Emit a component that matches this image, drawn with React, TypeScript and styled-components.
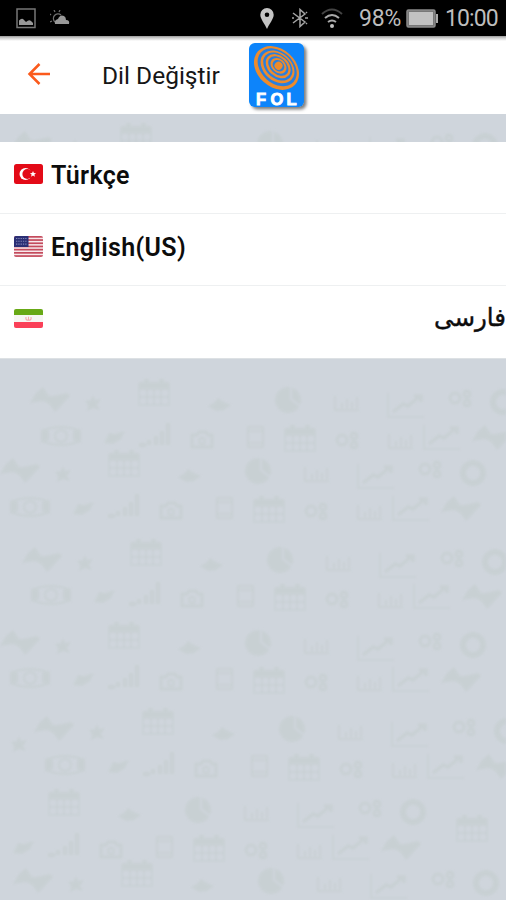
import React from "react";
import styled, { createGlobalStyle } from "styled-components";

const GlobalStyle = createGlobalStyle`
  * { box-sizing: border-box; }
  body { margin: 0; background: #cfd5dc; font-family: Roboto, "Noto Sans", sans-serif; }
`;

const Screen = styled.div`
  position: relative;
  isolation: isolate;
  display: flex;
  flex-direction: column;
  width: 506px;
  height: 900px;
  overflow: hidden;
  background: #cfd5dc;
`;

const Backdrop = styled.svg`
  position: absolute;
  inset: 0;
  z-index: -1;
  color: #c5cecf;
  opacity: 0.62;
  filter: blur(1.3px);
`;

const StatusBar = styled.header`
  display: flex;
  justify-content: space-between;
  height: 36px;
  padding: 0 7px 0 16px;
  background: #000;
  color: #bdbdbd;
`;

const StatusGroup = styled.div<{ $gap?: number }>`
  display: flex;
  align-items: center;
  gap: ${(p) => p.$gap ?? 0}px;
`;

const StatusText = styled.span<{ $width: number; $tracking?: number }>`
  width: ${(p) => p.$width}px;
  font-size: 23px;
  line-height: 37px;
  letter-spacing: ${(p) => p.$tracking ?? 0}px;
  white-space: nowrap;
`;

const StatusIcon = styled.svg<{ $right?: number }>`
  display: block;
  flex: none;
  margin-right: ${(p) => p.$right ?? 0}px;
`;

const TitleBar = styled.div`
  display: flex;
  align-items: flex-start;
  height: 78px;
  padding-left: 27px;
  background: linear-gradient(#999 0, #d0d0d0 2px, #fff 5px);
`;

const BackButton = styled.button`
  display: flex;
  width: 75px;
  height: 78px;
  padding: 26px 0 0;
  border: 0;
  background: none;
`;

const Title = styled.h1`
  width: 145px;
  margin: 0;
  color: #161616;
  font-size: 24.5px;
  font-weight: 400;
  line-height: 80px;
  letter-spacing: 0;
  white-space: nowrap;
`;

const Logo = styled.svg`
  display: block;
  margin-top: 4px;
`;

const LanguageList = styled.ul`
  margin: 28px 0 0;
  padding: 0;
  list-style: none;
  background: #fff;
`;

const LanguageRow = styled.li`
  display: flex;
  align-items: flex-start;
  gap: 8px;
  height: 72px;
  padding-left: 14px;
  border-bottom: 1px solid #eef0f1;

  &:last-child {
    height: 73px;
    border-bottom-color: #dde1e4;
  }
`;

const LanguageName = styled.span`
  color: #0c0c0c;
  font-size: 25px;
  font-weight: 600;
  line-height: 67px;
  letter-spacing: 0.35px;
  white-space: nowrap;
`;

const PersianName = styled(LanguageName)`
  flex: 1;
  font-family: "DejaVu Sans", sans-serif;
  font-size: 24.5px;
  font-weight: 400;
  line-height: 64px;
  letter-spacing: 0;
  text-align: start;
  -webkit-text-stroke: 0.4px #0c0c0c;
`;

const Flag = styled.svg`
  display: block;
  flex: none;
  margin-top: 21px;
`;

type Mark = [kind: string, dx: number, dy: number];

const upperMarks: Mark[] = [
  ["hand", 0, 0], ["star", 43, 5], ["calendar", 104, -6], ["cap", 170, 6], ["pie", 238, 2],
  ["bars", 297, 5], ["line", 356, 7], ["gears", 410, 0], ["donut", 453, 4],
];

const lowerMarks: Mark[] = [
  ["money", 0, 0], ["leaf", 54, 2], ["signal", 95, 0], ["camera", 141, 4], ["phone", 194, 1],
  ["calendar", 239, 2], ["gears", 286, 4], ["bars", 340, 5], ["line", 381, 1], ["hand", 431, 0],
];

const bands: { x: number; y: number; marks: Mark[] }[] = [
  { x: 32, y: 142, marks: upperMarks },
  { x: 50, y: 398, marks: upperMarks },
  { x: 61, y: 436, marks: lowerMarks },
  { x: 20, y: 469, marks: upperMarks },
  { x: 30, y: 507, marks: lowerMarks },
  { x: 42, y: 558, marks: upperMarks },
  { x: 51, y: 595, marks: lowerMarks },
  { x: 20, y: 641, marks: upperMarks },
  { x: 30, y: 678, marks: lowerMarks },
  { x: 54, y: 727, marks: upperMarks },
  { x: 65, y: 765, marks: lowerMarks },
  { x: -40, y: 808, marks: upperMarks.filter(([kind]) => kind !== "star") },
  { x: -30, y: 846, marks: lowerMarks },
  { x: 33, y: 879, marks: upperMarks },
];

const shapes: Record<string, React.ReactNode> = {
  hand: <path d="M-20 5l6-10 7-6 6 9 4 0 14-3 3 3-8 9-7 7-6-8-6-3z" fill="currentColor" />,
  star: <path d="M0-8l2 5 6-1-4 6 3 5-7-2-6 3 1-6-3-4 6-1z" fill="currentColor" />,
  cap: <path d="M-12 2l6-3 4-5 6 4 7 3-7 5-8 1z" fill="currentColor" />,
  leaf: <path d="M-11 5l5-10 6 1 10-3-4 8-8 5z" fill="currentColor" />,
  pie: <><circle r="13" fill="currentColor" /><path d="M3-14V-1L12 6" stroke="#cfd5dc" strokeWidth="2" fill="none" /></>,
  donut: <circle r="10" stroke="currentColor" strokeWidth="6" fill="none" />,
  bars: <path d="M-12-7V7H12M-5 5V0M0 5V-4M5 5V-1M10 5V-6" stroke="currentColor" strokeWidth="2" fill="none" />,
  line: <><path d="M-18-12V12H18" stroke="currentColor" strokeWidth="1.6" fill="none" /><path d="M-13 7l10-8 5 2L14-9M8-9h7v6" stroke="currentColor" strokeWidth="3.4" fill="none" /></>,
  gears: <g stroke="currentColor" strokeWidth="3" fill="none"><circle cx="-5" r="5" /><circle cx="7" cy="-4" r="3" /><circle cx="7" cy="5" r="3" /></g>,
  calendar: <><path d="M-15-8H15V13H-15zM-15-3H15M-15 5H15M-7-3V13M0-3V13M7-3V13" stroke="currentColor" strokeWidth="1.5" fill="none" /><path d="M-15-10h5v-3h5v3H5v-3h5v3h5v7h-30z" fill="currentColor" /></>,
  money: <><path d="M-19-5Q0-13 19-5V5Q0 13-19 5z" stroke="currentColor" strokeWidth="2" fill="none" /><path d="M-19-7l7 2v9l-7 3zM19-7l-7 2v9l7 3z" fill="currentColor" /><circle r="6" stroke="currentColor" strokeWidth="2" fill="none" /></>,
  signal: <path d="M-17 9h7M-7 9V4M0 9V0M6 9V-5M12 9v-22" stroke="currentColor" strokeWidth="4" fill="none" />,
  camera: <><path d="M-10-5h5l2-3h7l2 3h4V7h-20z" stroke="currentColor" strokeWidth="3" fill="none" /><circle cy="1" r="3" fill="none" stroke="currentColor" strokeWidth="2" /></>,
  phone: <path d="M-7-10H8V10H-7zM-7-6H8M-7 6H8" stroke="currentColor" strokeWidth="2" fill="none" />,
};

function Doodles() {
  return (
    <Backdrop width="506" height="900" aria-hidden="true">
      {bands.map((band) =>
        band.marks.map(([kind, dx, dy]) => (
          <g key={`${band.y}-${dx}`} transform={`translate(${band.x + dx} ${band.y + dy})`}>{shapes[kind]}</g>
        )),
      )}
      <g transform="translate(472 828)">{shapes.calendar}</g>
      <g transform="translate(19 744)">{shapes.star}</g>
    </Backdrop>
  );
}

const TurkishFlag = () => (
  <Flag width="29" height="21" viewBox="0 0 29 21">
    <rect y="1" width="29" height="20" rx="2.5" fill="#e30a17" />
    <circle cx="11.5" cy="11" r="6" fill="#fff" />
    <circle cx="13.3" cy="11" r="4.9" fill="#e30a17" />
    <path d="M19 8l.9 2.1 2.2.1-1.7 1.4.5 2.2-1.9-1.2-1.9 1.2.5-2.2-1.7-1.4 2.2-.1z" fill="#fff" />
  </Flag>
);

const AmericanFlag = () => (
  <Flag width="29" height="23" viewBox="0 0 29 23">
    <clipPath id="us"><rect y="1" width="29" height="21" rx="2" /></clipPath>
    <g clipPath="url(#us)">
      <rect width="29" height="23" fill="#f8e9ec" />
      {[1, 4.2, 7.4, 10.6, 13.8, 17, 20.2].map((y) => <rect key={y} y={y} width="29" height="1.7" fill="#c44b5d" />)}
      <rect y="1" width="14.5" height="11" fill="#2b2f75" />
      <path d="M2 3.5h11M2 6.3h11M2 9.1h11" stroke="#8184b6" strokeWidth="1.1" strokeDasharray="1.3 1" />
    </g>
  </Flag>
);

const IranianFlag = () => (
  <Flag width="29" height="22" viewBox="0 0 29 22">
    <clipPath id="ir"><rect y="2" width="29" height="19" rx="2" /></clipPath>
    <g clipPath="url(#ir)">
      <rect y="2" width="29" height="19" fill="#f6f6f3" />
      <rect y="2" width="29" height="6" fill="#68a916" />
      <rect y="15" width="29" height="6" fill="#fa4058" />
    </g>
    <path d="M12 10c-.7 3 1 3.3 2.5 3.3S17.7 13 17 10M14.5 9.8v3.5" stroke="#f7a9ae" strokeWidth="1.1" fill="none" />
  </Flag>
);

export default function App() {
  return (
    <Screen>
      <GlobalStyle />
      <Doodles />
      <StatusBar>
        <StatusGroup $gap={14}>
          <StatusIcon width="20" height="21" viewBox="0 0 20 21">
            <rect x="1" y="1" width="18" height="18.5" fill="none" stroke="#777" strokeWidth="1.5" />
            <path d="M3 17v-4.500q3-3 5-.5l2 2q3-3 5-1l2 2v2z" fill="#999" />
          </StatusIcon>
          <StatusIcon width="20" height="16" viewBox="0 0 20 16">
            <path d="M5 12a4.500 4.500 0 1 1 6-7M5 2L4 0M1 5L0 4M2 11l-2 1M9 2l1-2" fill="none" stroke="#707070" strokeWidth="1.2" />
            <path d="M5 14q-1-4 3-5 2-5 6-3 2 1 2 4 4 0 3 4z" fill="#999" />
          </StatusIcon>
        </StatusGroup>
        <StatusGroup>
          <StatusIcon width="14" height="21" viewBox="0 0 14 21" $right={17}>
            <path fillRule="evenodd" d="M7 0a6.700 6.700 0 0 1 6.700 6.700C13.700 11 9 16 7 21 5 16 .3 11 .3 6.700A6.700 6.700 0 0 1 7 0zm0 4.500a2.300 2.300 0 1 0 0 4.600 2.300 2.300 0 0 0 0-4.600z" fill="#c4c4c4" />
          </StatusIcon>
          <StatusIcon width="18" height="20" viewBox="0 0 18 20" $right={12}>
            <path d="M2 5l12 9-5 4.500v-17L14 6 2 15M1 10h2M14 10h3M15 5l1-1M15 15l1 1" fill="none" stroke="#a4a4a4" strokeWidth="1.5" />
          </StatusIcon>
          <StatusIcon width="22" height="21" viewBox="0 0 22 21" $right={16}>
            <path d="M1 6Q11-3 21 6" fill="none" stroke="#444" strokeWidth="2" />
            <path d="M4 10q7-6 14 0M7 14q4-3 8 0" fill="none" stroke="#aaa" strokeWidth="2" />
            <circle cx="11" cy="18" r="2" fill="#c0c0c0" />
          </StatusIcon>
          <StatusText $width={47} $tracking={-0.2}>98%</StatusText>
          <StatusIcon width="32" height="19" viewBox="0 0 32 19" $right={7}>
            <rect x="1" y="1" width="28" height="17" rx="1.500" fill="#777" stroke="#8b8b8b" strokeWidth="1.5" />
            <rect x="3" y="3" width="24" height="13" fill="#c1c1c1" />
            <path d="M30 5h2v9h-2z" fill="#aaa" />
          </StatusIcon>
          <StatusText $width={54} $tracking={-0.9}>10:00</StatusText>
        </StatusGroup>
      </StatusBar>
      <TitleBar>
        <BackButton aria-label="Geri">
          <svg width="24" height="24" viewBox="0 0 24 24" fill="none" stroke="#fb5a1c" strokeWidth="2.5">
            <path d="M12.500 2L2.500 12l10 10M2.500 12H23" />
          </svg>
        </BackButton>
        <Title>Dil Değiştir</Title>
        <Logo width="66" height="74" viewBox="0 0 66 74">
          <defs>
            <filter id="shade" x="-10%" y="-10%" width="130%" height="130%">
              <feDropShadow dx="2.500" dy="2.500" stdDeviation="1.600" floodOpacity="0.5" />
            </filter>
          </defs>
          <rect x="2" y="3" width="55" height="64" rx="6" fill="#0784fa" filter="url(#shade)" />
          <g fill="#ed8b2c" transform="translate(1.500 0) rotate(42 28 28)">
            <ellipse cx="28" cy="28" rx="25" ry="19" />
            <ellipse cx="28" cy="27" rx="22" ry="16" fill="#287fe0" />
            <ellipse cx="28" cy="26.500" rx="19" ry="14" />
            <ellipse cx="28" cy="26" rx="16.500" ry="11.800" fill="#287fe0" />
            <ellipse cx="28" cy="25.500" rx="14" ry="10.200" />
            <ellipse cx="28" cy="25.300" rx="11.500" ry="8" fill="#287fe0" />
            <ellipse cx="28" cy="25" rx="9" ry="6.800" />
            <ellipse cx="28" cy="25" rx="6.500" ry="5" fill="#287fe0" />
            <circle cx="28" cy="25" r="4" />
          </g>
          <text x="9 23.500 39.500" y="65" fontFamily="Liberation Sans, sans-serif" fontSize="16.500" fontWeight="700" fill="#fff" stroke="#fff" strokeWidth=".9">FOL</text>
        </Logo>
      </TitleBar>
      <LanguageList>
        <LanguageRow><TurkishFlag /><LanguageName>Türkçe</LanguageName></LanguageRow>
        <LanguageRow><AmericanFlag /><LanguageName>English(US)</LanguageName></LanguageRow>
        <LanguageRow><IranianFlag /><PersianName lang="fa" dir="rtl">فارسی</PersianName></LanguageRow>
      </LanguageList>
    </Screen>
  );
}
